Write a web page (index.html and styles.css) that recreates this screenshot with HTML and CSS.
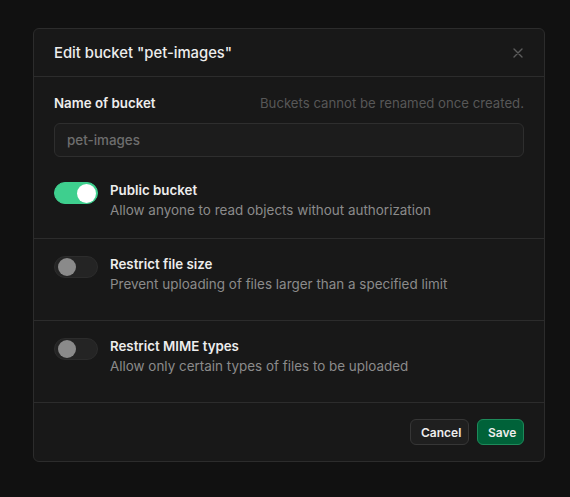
FILE: index.html
```html
<!DOCTYPE html>
<html>
<head>
<meta charset="utf-8">
<link rel="stylesheet" href="styles.css">
</head>
<body>
<div class="modal">
  <div class="header">
    <h2 class="title">Edit bucket "pet-images"</h2>
    <svg class="close" width="10" height="10" viewBox="0 0 10 10"><path d="M1 1L9 9M9 1L1 9" stroke="#5c5c5c" stroke-width="1.4" stroke-linecap="round"/></svg>
  </div>
  <div class="section first">
    <div class="label-row">
      <span class="label">Name of bucket</span>
      <span class="hint">Buckets cannot be renamed once created.</span>
    </div>
    <div class="input">pet-images</div>
    <div class="toggle-row">
      <span class="switch on"><span class="knob"></span></span>
      <div class="texts">
        <div class="label">Public bucket</div>
        <div class="desc">Allow anyone to read objects without authorization</div>
      </div>
    </div>
  </div>
  <div class="section">
    <div class="toggle-row">
      <span class="switch"><span class="knob"></span></span>
      <div class="texts">
        <div class="label">Restrict file size</div>
        <div class="desc">Prevent uploading of files larger than a specified limit</div>
      </div>
    </div>
  </div>
  <div class="section">
    <div class="toggle-row">
      <span class="switch"><span class="knob"></span></span>
      <div class="texts">
        <div class="label">Restrict MIME types</div>
        <div class="desc">Allow only certain types of files to be uploaded</div>
      </div>
    </div>
  </div>
  <div class="footer">
    <button class="btn cancel">Cancel</button>
    <button class="btn save">Save</button>
  </div>
</div>
</body>
</html>
```

FILE: styles.css
```css
* { box-sizing: border-box; }
html, body { margin: 0; padding: 0; }
body {
  background: #111111;
  font-family: Inter, "Noto Sans", sans-serif;
  width: 570px;
  height: 497px;
  padding: 28px 25px 0 33px;
}
.modal {
  width: 512px;
  height: 434px;
  background: #181818;
  border: 1px solid #2c2c2c;
  border-radius: 6px;
  display: flex;
  flex-direction: column;
}
.header {
  height: 48px;
  flex: none;
  display: flex;
  align-items: center;
  justify-content: space-between;
  padding: 0 20px;
  border-bottom: 1px solid #2c2c2c;
}
.title {
  margin: 0;
  font-size: 14.8px;
  font-weight: 500;
  color: #ededed;
}
.close { margin-right: 1px; }
.section {
  flex: none;
  border-bottom: 1px solid #2c2c2c;
  padding: 15px 20px 26px;
}
.section.first { padding: 16px 20px 18px; }
.label-row {
  display: flex;
  justify-content: space-between;
  align-items: center;
  height: 20px;
}
.label {
  font-size: 13.3px;
  font-weight: 600;
  color: #ededed;
  line-height: 20px;
}
.hint {
  font-size: 13.2px;
  color: #575757;
  line-height: 20px;
}
.input {
  margin-top: 10px;
  height: 34px;
  border: 1px solid #2e2e2e;
  background: #1c1c1c;
  border-radius: 6px;
  padding: 0 12px;
  display: flex;
  align-items: center;
  font-size: 13.4px;
  font-weight: 500;
  color: #6e6e6e;
}
.first .toggle-row { margin-top: 23px; }
.toggle-row {
  display: flex;
  align-items: flex-start;
  gap: 12px;
}
.switch {
  flex: none;
  width: 44px;
  height: 22px;
  margin-top: 2px;
  border-radius: 11px;
  background: #242424;
  border: 1px solid #2c2c2c;
  display: flex;
  align-items: center;
  padding: 0 3px;
}
.switch .knob {
  width: 18px;
  height: 18px;
  border-radius: 50%;
  background: #8a8a8a;
}
.switch.on {
  background: #3ecf8e;
  border-color: #3ecf8e;
  justify-content: flex-end;
  padding: 0 1px;
}
.switch.on .knob { background: #ffffff; width: 19px; height: 19px; }
.desc {
  font-size: 13.45px;
  color: #8b8b8b;
  line-height: 20px;
}
.footer {
  flex: 1;
  display: flex;
  justify-content: flex-end;
  align-items: center;
  gap: 8px;
  padding: 0 20px;
}
.btn {
  font-family: inherit;
  font-size: 12px;
  font-weight: 600;
  height: 26px;
  border-radius: 6px;
  padding: 0 10px;
  cursor: pointer;
  color: #ededed;
}
.cancel {
  width: 59px;
  background: #1f1f1f;
  border: 1px solid #363636;
}
.save {
  width: 47px;
  background: #006239;
  border: 1px solid #1d8a5a;
}
```
